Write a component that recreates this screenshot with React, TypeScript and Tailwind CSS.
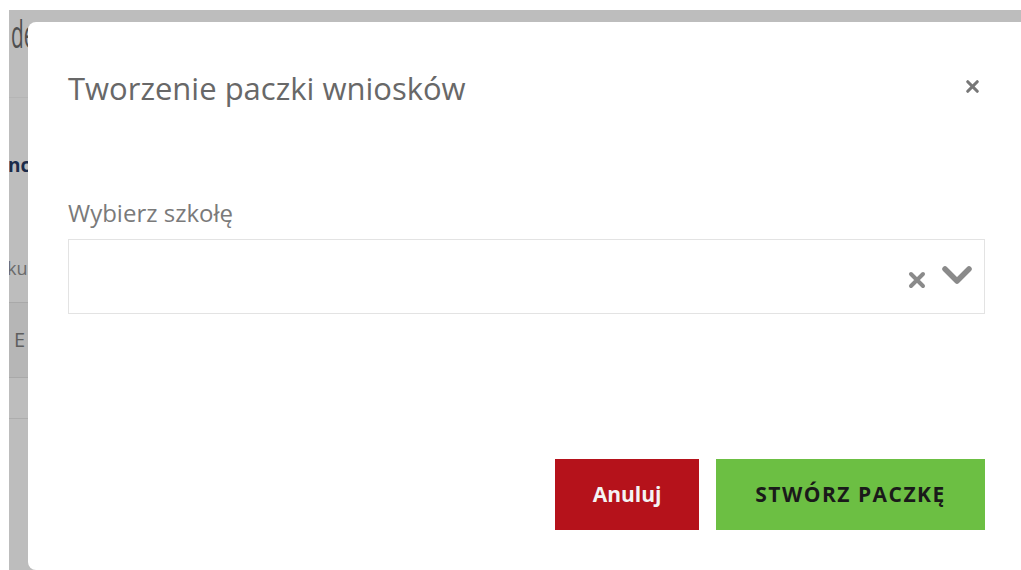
import { X } from 'lucide-react'

const font = { fontFamily: '"Open Sans", "Noto Sans", sans-serif' }

// Slice of the list page that stays visible beside the dialog
function PageEdge() {
  return (
    <div className="w-[19px] shrink-0 overflow-hidden bg-[#bdbdbd]">
      <div className="h-[88px] border-b border-[#b5b5b5] pl-[2px] pt-[4px]">
        <div className="origin-left scale-x-[0.55] whitespace-nowrap text-[38px] leading-[38px] text-[#4f4f4f]">de</div>
      </div>
      <div className="h-[83px] whitespace-nowrap pt-[57px] text-[19px] font-bold leading-[20px] text-[#1c2b4a]">
        <span className="-ml-[1px]">nc</span>
      </div>
      <div className="h-[122px] whitespace-nowrap border-b border-[#a9a9a9] pt-[77px] text-[18px] leading-[20px] text-[#6a6a6a]">
        <span className="-ml-[2px]">ku</span>
      </div>
      <div className="h-[75px] whitespace-nowrap border-b border-[#a9a9a9] bg-[#b6b6b6] pl-[5px] pt-[26px] text-[20px] leading-[22px] text-[#5e5e5e]">
        E
      </div>
      <div className="h-[41px] border-b border-[#adadad]" />
    </div>
  )
}

function ClearIcon() {
  return (
    <svg width="18" height="18" viewBox="0 0 18 18" className="text-[#8a8a8a]">
      <path d="M3 3L15 15M15 3L3 15" stroke="currentColor" strokeWidth="4" strokeLinecap="round" />
    </svg>
  )
}

function Chevron() {
  return (
    <svg width="30" height="20" viewBox="0 0 30 20" className="text-[#8a8a8a]">
      <path d="M3 4L15 16L27 4" fill="none" stroke="currentColor" strokeWidth="5.5" strokeLinecap="round" strokeLinejoin="round" />
    </svg>
  )
}

export default function App() {
  return (
    <div className="h-[570px] w-[1021px] overflow-hidden bg-white pl-[9px] pt-[10px]" style={font}>
      <div className="flex h-full bg-[#bdbdbd]">
        <PageEdge />

        {/* Dialog */}
        <div className="flex-1 pt-[12px]">
          <div className="h-full w-[997px] rounded-l-[8px] bg-white px-[40px] pt-[46px]">
            <div className="flex items-center justify-between">
              <h2 className="text-[31px] leading-[40px] text-[#686868]">Tworzenie paczki wniosków</h2>
              <button className="mr-[3px] -mt-[3px] text-[#777]">
                <X size={19} strokeWidth={4} />
              </button>
            </div>

            <label className="mt-[90px] block text-[24px] leading-[30px] text-[#7a7a7a]">Wybierz szkołę</label>
            <div className="mt-[11px] flex h-[75px] items-center justify-end gap-[16px] border border-[#e3e3e3] pr-[12px]">
              <div className="mt-[6px]">
                <ClearIcon />
              </div>
              <div className="-mt-[4px]">
                <Chevron />
              </div>
            </div>

            <div className="mt-[145px] flex justify-end gap-[17px]">
              <button className="h-[71px] w-[144px] bg-[#b5121b] text-[21px] font-bold text-[#f4f4f4]">Anuluj</button>
              <button className="h-[71px] w-[269px] bg-[#6cbf43] text-[21px] font-bold tracking-[1.5px] text-[#1a1a1a]">
                STWÓRZ PACZKĘ
              </button>
            </div>
          </div>
        </div>
      </div>
    </div>
  )
}
